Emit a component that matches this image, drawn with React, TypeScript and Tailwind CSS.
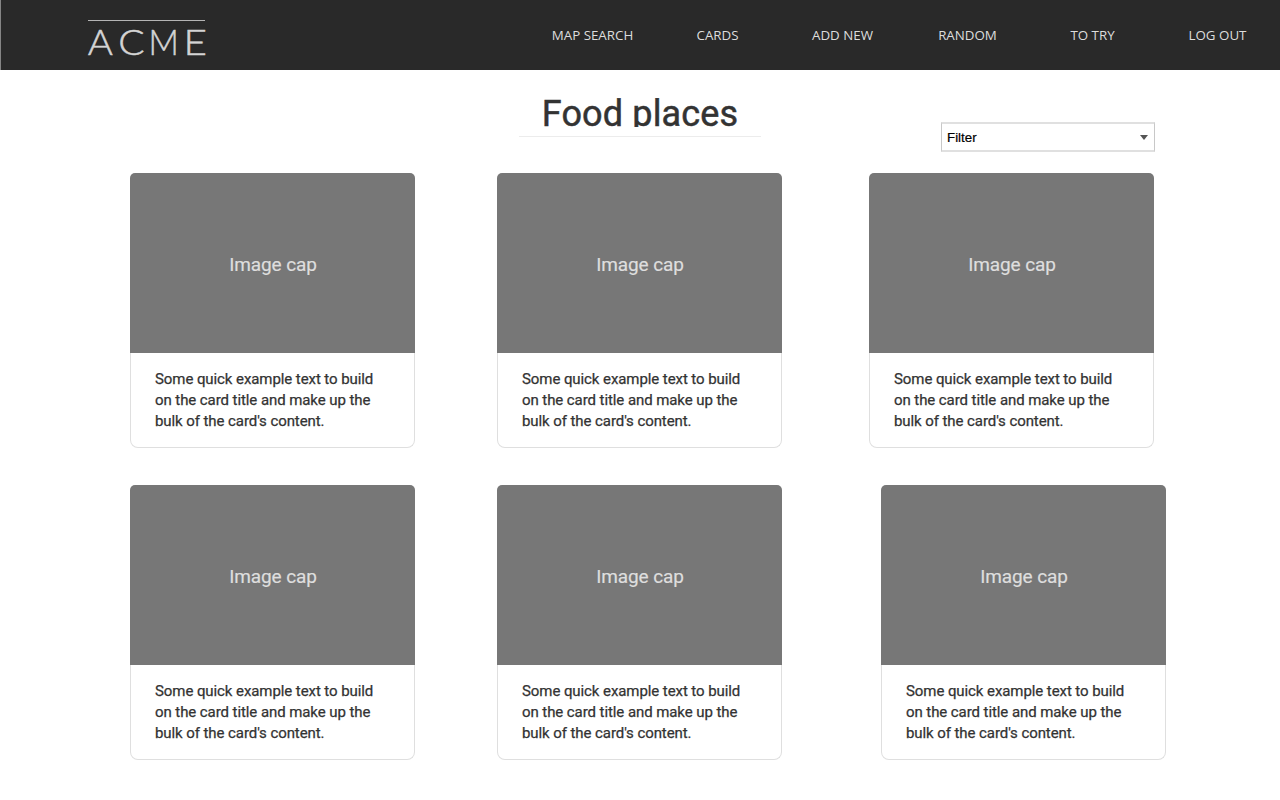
const links = ['MAP SEARCH', 'CARDS', 'ADD NEW', 'RANDOM', 'TO TRY', 'LOG OUT'];

function Logo() {
  return (
    <svg className="ml-[87px] mt-[17px] h-[46px] w-[124px] overflow-visible" viewBox="87 17 124 46" aria-label="ACME">
      <rect x="88" y="20" width="117" height="1" fill="#b4b4b4" />
      <g fill="#d4d4d4" stroke="#d4d4d4" strokeWidth="0.5" fontSize="35.5" className="font-['Lato',sans-serif] font-light">
        <text transform="translate(87.7 55.3) scale(1.08 1)">A</text>
        <text transform="translate(118.2 55.3) scale(1.1 1)">C</text>
        <text transform="translate(148.5 55.3) scale(0.94 1)">M</text>
        <text transform="translate(183.4 55.3) scale(1.14 1)">E</text>
      </g>
    </svg>
  );
}

function Card() {
  return (
    <article className="flex h-[275px] w-[285px] flex-none flex-col">
      <div className="flex h-[180px] flex-none items-center justify-center rounded-t-[5px] bg-[#777777] pl-px pt-[4px] text-[19px] tracking-[-0.1px] text-[#dedede] [-webkit-text-stroke:0.2px_#dedede]">
        <span className="whitespace-nowrap">Image cap</span>
      </div>
      <div className="flex-1 rounded-b-[8px] border border-t-0 border-[#dfdfdf] pl-6 pt-4 text-[15px] leading-[21px] tracking-[-0.08px] text-[#333333] [-webkit-text-stroke:0.25px_#333333]">
        <p className="whitespace-nowrap">Some quick example text to build</p>
        <p className="whitespace-nowrap">on the card title and make up the</p>
        <p className="whitespace-nowrap">bulk of the card's content.</p>
      </div>
    </article>
  );
}

export default function App() {
  return (
    <div className="h-[800px] w-[1280px] overflow-hidden bg-white font-['Roboto',sans-serif]">
      <header className="flex h-[70px] border-l border-[#858585] bg-[#292929]">
        <div className="-ml-px w-[530px] flex-none">
          <Logo />
        </div>
        <nav className="grid h-[70px] w-[750px] grid-cols-6 items-center pt-px font-['Open_Sans',sans-serif] text-[13.33px] text-[#dddddd]">
          {links.map((l) => (
            <a key={l} href="#" className="whitespace-nowrap text-center">{l}</a>
          ))}
        </nav>
      </header>
      <div className="flex h-[103px]">
        <div className="ml-[519px] mt-[22px] h-[45px] w-[242px] flex-none border-b border-[#ececec]">
          <h1 className="h-[35px] overflow-hidden text-center text-[36px] leading-[45px] tracking-[0.15px] text-[#333333] [-webkit-text-stroke:0.5px_#333333]">Food places</h1>
        </div>
        <button className="ml-[180px] mt-[52px] flex h-[30px] w-[214px] items-center justify-between border-x border-y-2 border-x-[#c8c8c8] border-y-[#e0e0e0] pl-[5px] pr-[6px] font-['Liberation_Sans',sans-serif] text-[13.33px] text-black">
          <span className="pt-px [-webkit-text-stroke:0.2px_black]">Filter</span>
          <svg className="h-[5px] w-2" viewBox="0 0 8 5"><path d="M0 0h8L4 5z" fill="#555" /></svg>
        </button>
      </div>
      <main className="flex flex-col gap-[37px]">
        <div className="flex pl-[130px]">
          <Card />
          <div className="ml-[82px]"><Card /></div>
          <div className="ml-[87px]"><Card /></div>
        </div>
        <div className="flex pl-[130px]">
          <Card />
          <div className="ml-[82px]"><Card /></div>
          <div className="ml-[99px]"><Card /></div>
        </div>
      </main>
    </div>
  );
}
